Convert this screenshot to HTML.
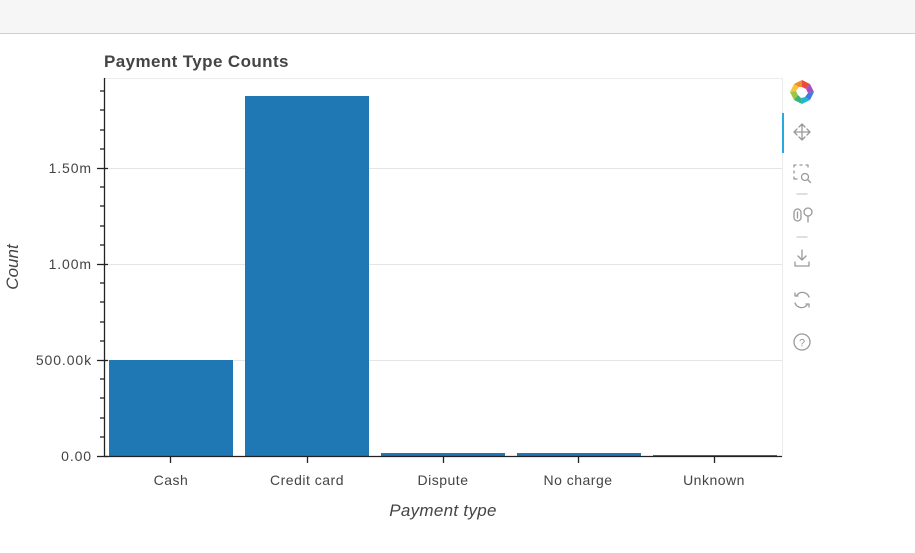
<!DOCTYPE html>
<html><head><meta charset="utf-8"><style>
body{margin:0;width:915px;height:553px;background:#fff;overflow:hidden;font-family:"Liberation Sans",Arial,sans-serif}
.top{position:absolute;left:0;top:0;width:915px;height:33px;background:#f6f6f6;border-bottom:1px solid #cfcfcf}
svg{position:absolute;left:0;top:0}
</style></head><body>
<div class="top"></div>
<svg width="915" height="553" xmlns="http://www.w3.org/2000/svg" font-family="Liberation Sans, Arial, sans-serif">
<text x="104" y="67" font-size="17" font-weight="bold" fill="#444" letter-spacing="0.4">Payment Type Counts</text>
<rect x="104.5" y="78.5" width="678" height="378" fill="none" stroke="#ececec"/>
<g stroke="#e5e5e5" stroke-width="1">
<line x1="104" y1="168.5" x2="782" y2="168.5"/>
<line x1="104" y1="264.5" x2="782" y2="264.5"/>
<line x1="104" y1="360.5" x2="782" y2="360.5"/>
</g>
<g fill="#1f77b4">
<rect x="109" y="360" width="124" height="96"/>
<rect x="245" y="96" width="124" height="360"/>
<rect x="381" y="453" width="124" height="3"/>
<rect x="517" y="453" width="124" height="3"/>
<rect x="653" y="455" width="124" height="1"/>
</g>
<g stroke="#222" stroke-width="1.3">
<line x1="104.5" y1="78" x2="104.5" y2="457"/>
<line x1="104" y1="456.5" x2="782" y2="456.5"/>
<line x1="97" y1="168.5" x2="108" y2="168.5"/>
<line x1="97" y1="264.5" x2="108" y2="264.5"/>
<line x1="97" y1="360.5" x2="108" y2="360.5"/>
<line x1="97" y1="456.5" x2="108" y2="456.5"/>
<line x1="100" y1="91" x2="104" y2="91"/><line x1="100" y1="110" x2="104" y2="110"/><line x1="100" y1="130" x2="104" y2="130"/><line x1="100" y1="149" x2="104" y2="149"/>
<line x1="100" y1="187" x2="104" y2="187"/><line x1="100" y1="206" x2="104" y2="206"/><line x1="100" y1="226" x2="104" y2="226"/><line x1="100" y1="245" x2="104" y2="245"/>
<line x1="100" y1="283" x2="104" y2="283"/><line x1="100" y1="302" x2="104" y2="302"/><line x1="100" y1="322" x2="104" y2="322"/><line x1="100" y1="341" x2="104" y2="341"/>
<line x1="100" y1="379" x2="104" y2="379"/><line x1="100" y1="398" x2="104" y2="398"/><line x1="100" y1="418" x2="104" y2="418"/><line x1="100" y1="437" x2="104" y2="437"/>
<line x1="170.5" y1="456" x2="170.5" y2="463"/><line x1="307.5" y1="456" x2="307.5" y2="463"/><line x1="443.5" y1="456" x2="443.5" y2="463"/><line x1="578.5" y1="456" x2="578.5" y2="463"/><line x1="714.5" y1="456" x2="714.5" y2="463"/>
</g>
<g font-size="14" fill="#444" text-anchor="end" letter-spacing="0.9">
<text x="92" y="173">1.50m</text><text x="92" y="269">1.00m</text><text x="92" y="365">500.00k</text><text x="92" y="461">0.00</text>
</g>
<g font-size="14" fill="#444" text-anchor="middle" letter-spacing="0.5">
<text x="171" y="485">Cash</text><text x="307" y="485">Credit card</text><text x="443" y="485">Dispute</text><text x="578" y="485">No charge</text><text x="714" y="485">Unknown</text>
</g>
<text x="443" y="516" font-size="17" font-style="italic" fill="#444" text-anchor="middle" letter-spacing="0.3">Payment type</text>
<text transform="translate(18,267) rotate(-90)" font-size="17" font-style="italic" fill="#444" text-anchor="middle">Count</text>
<rect x="782" y="113" width="2" height="40" fill="#26aae1"/>
<g transform="translate(802,92)">
<path d="M0,-12 L8,-8 L4,-3 L0,-5Z" fill="#e94b3c"/>
<path d="M8,-8 L12,0 L6,1 L4,-3Z" fill="#a44fc4"/>
<path d="M12,0 L8,8 L3,5 L6,1Z" fill="#3b7ddd"/>
<path d="M8,8 L0,12 L-1,6 L3,5Z" fill="#1fb7d6"/>
<path d="M0,12 L-8,8 L-4,3 L-1,6Z" fill="#36b37e"/>
<path d="M-8,8 L-12,0 L-6,-1 L-4,3Z" fill="#9bc83f"/>
<path d="M-12,0 L-8,-8 L-3,-5 L-6,-1Z" fill="#f6c342"/>
<path d="M-8,-8 L0,-12 L0,-5 L-3,-5Z" fill="#f28c28"/>
</g>
<g fill="none" stroke="#999" stroke-width="1.3" stroke-linecap="round" stroke-linejoin="round">
<path d="M802,124 v16 M794,132 h16 M799,127 l3,-3 3,3 M799,137 l3,3 3,-3 M797,129 l-3,3 3,3 M807,129 l3,3 -3,3"/>
<path d="M794,167 v-2 h2 M800,165 h2 M794,171 v2 M794,177 v2 h3 M806,165 h2 v2"/>
<circle cx="805" cy="177" r="3.5"/><path d="M807.5,179.5 l3,3"/>
<path d="M797,194 h10" stroke="#ccc"/>
<rect x="794" y="209" width="7" height="12" rx="3.5"/><path d="M797.5,212 v6"/>
<circle cx="808" cy="212" r="4"/><path d="M808,216 v6"/>
<path d="M797,237 h10" stroke="#ccc"/>
<path d="M802,250 v10 M798,256 l4,4 4,-4 M795,262 v4 h14 v-4"/>
<path d="M809,297 a7,7 0 0 0 -12,-2 M795,293 v3 h3 M795,303 a7,7 0 0 0 12,2 M809,307 v-3 h-3"/>
<circle cx="802" cy="342" r="8"/>
</g>
<text x="802" y="346.5" font-size="11" fill="#999" text-anchor="middle">?</text>
</svg>
</body></html>
